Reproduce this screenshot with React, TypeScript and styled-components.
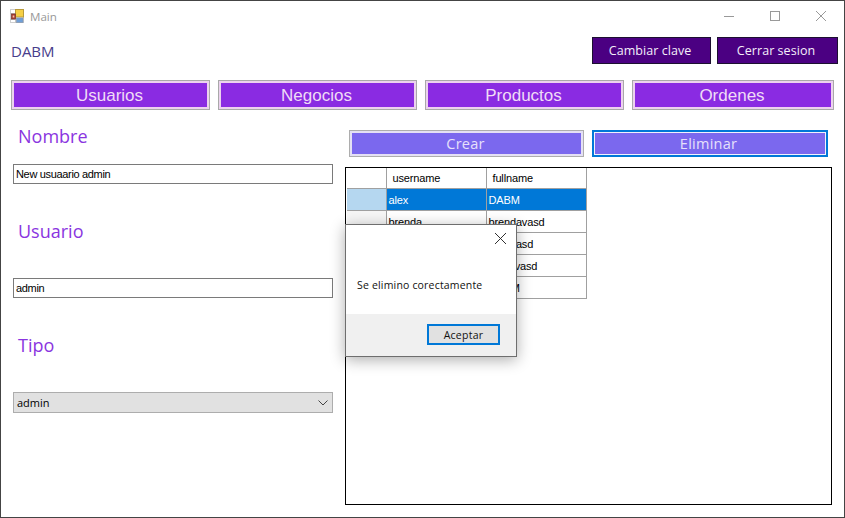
import React from "react";
import styled, { createGlobalStyle } from "styled-components";

const Global = createGlobalStyle`
  html, body { margin: 0; padding: 0; background: #fff; }
  body { width: 845px; height: 518px; overflow: hidden; font-family: "Open Sans", "Noto Sans", sans-serif; }
  * { box-sizing: border-box; }
`;

const Window = styled.div`
  position: relative;
  width: 845px;
  height: 518px;
  background: #fff;
  border: 1px solid #444;
  display: flex;
  flex-direction: column;
`;

const TitleBar = styled.div`
  height: 31px;
  flex: none;
  display: flex;
  align-items: center;
  padding: 0 18px 1px 9px;
  gap: 6px;
`;

const TitleText = styled.span`
  font-size: 11.6px;
  color: #999;
  flex: 1;
`;

const Controls = styled.div`
  display: flex;
  gap: 36px;
  align-items: center;
`;

const Header = styled.div`
  margin-top: 5px;
  height: 27px;
  flex: none;
  display: flex;
  align-items: center;
  padding: 0 6px 0 10px;
`;

const UserName = styled.span`
  flex: 1;
  font-size: 15px;
  padding-top: 1px;
  color: #483d8b;
`;

const HeaderButtons = styled.div`
  display: flex;
  gap: 6px;
`;

const DarkButton = styled.button<{ $w: number }>`
  width: ${(p) => p.$w}px;
  height: 27px;
  padding: 0 3px 0 0;
  background: #4b0082;
  border: 1px solid #1c1030;
  color: #f4eefa;
  font: 12.5px "Open Sans", sans-serif;
  letter-spacing: 0.05px;
`;

const Nav = styled.div`
  margin-top: 16px;
  flex: none;
  padding-left: 10px;
  display: grid;
  grid-template-columns: 199px 199px 199px 202px;
  column-gap: 8px;
`;

const NavButton = styled.button`
  height: 30px;
  padding: 1px 2px 0 0;
  background: #8a2be2;
  border: 1px solid #a9a9a9;
  box-shadow: inset 0 0 0 2px #ecd2ee;
  color: #f0dcf6;
  font: 17px "Liberation Sans", Arial, sans-serif;
`;

const Content = styled.div`
  flex: 1;
  display: grid;
  grid-template-columns: 344px 487px;
`;

const LeftColumn = styled.div`
  padding: 12px 0 0 12px;
  display: flex;
  flex-direction: column;
`;

const Field = styled.div<{ $gap: number }>`
  display: flex;
  flex-direction: column;
  width: 320px;
  margin-bottom: 33px;
  gap: ${(p) => p.$gap}px;
`;

const FieldLabel = styled.div`
  height: 28px;
  line-height: 28px;
  padding-left: 5px;
  font-size: 18px;
  color: #8a35e0;
`;

const TextBox = styled.input`
  width: 320px;
  height: 20px;
  border: 1px solid #7a7a7a;
  padding: 0 2px;
  font: 11px "Liberation Sans", Arial, sans-serif;
  letter-spacing: -0.33px;
  color: #000;
  background: #fff;
  outline: none;
`;

const Combo = styled.div`
  width: 320px;
  height: 21px;
  border: 1px solid #adadad;
  background: #e1e1e1;
  display: flex;
  align-items: center;
  justify-content: space-between;
  padding: 0 4px 0 3px;
  font: 11px "Open Sans", sans-serif;
  color: #000;
`;

const RightColumn = styled.div`
  display: flex;
  flex-direction: column;
`;

const Toolbar = styled.div`
  margin-top: 20px;
  height: 27px;
  padding-left: 4px;
  display: flex;
  gap: 8px;
`;

const ActionButton = styled.button<{ $focused?: boolean }>`
  width: ${(p) => (p.$focused ? 236 : 235)}px;
  height: 27px;
  padding: 0 ${(p) => (p.$focused ? 3 : 2)}px 0 0;
  background: #7b68ee;
  border: ${(p) => (p.$focused ? "2px solid #0078d7" : "1px solid #adadad")};
  box-shadow: inset 0 0 0 ${(p) => (p.$focused ? "1px #f2f0fd" : "2px #e4e0f4")};
  color: #e6e0fb;
  font: 14.5px "Open Sans", sans-serif;
  letter-spacing: 0.25px;
`;

const GridPanel = styled.div`
  margin-top: 10px;
  width: 487px;
  height: 338px;
  border: 1px solid #000;
  background: #fff;
  padding: 0 0 0 1px;
`;

const Table = styled.table`
  border-collapse: collapse;
  table-layout: fixed;
  width: 239px;
  font: 11px "Liberation Sans", Arial, sans-serif;
  letter-spacing: -0.15px;
  color: #000;
`;

const HeadCell = styled.th`
  height: 20px;
  padding: 0 0 0 6px;
  border: 1px solid #a0a0a0;
  border-top: none;
  border-left: none;
  text-align: left;
  font-weight: 400;
  background: #fff;
`;

const RowHead = styled.td<{ $selected?: boolean }>`
  height: 22px;
  padding: 0;
  border: 1px solid #a0a0a0;
  border-left: none;
  background: ${(p) => (p.$selected ? "#b5d7f0" : "#f6f6f6")};
`;

const Cell = styled.td<{ $selected?: boolean }>`
  height: 22px;
  padding: 1px 0 0 2px;
  border: 1px solid #a0a0a0;
  background: ${(p) => (p.$selected ? "#0078d7" : "#fff")};
  color: ${(p) => (p.$selected ? "#fff" : "#000")};
`;

const Dialog = styled.div`
  position: absolute;
  left: 344px;
  top: 223px;
  width: 172px;
  height: 133px;
  background: #fff;
  border: 1px solid #6e6e6e;
  box-shadow: 0 3px 14px rgba(0, 0, 0, 0.32);
  display: flex;
  flex-direction: column;
`;

const DialogTop = styled.div`
  height: 27px;
  display: flex;
  justify-content: flex-end;
  align-items: center;
  padding: 0 10px 0 0;
  flex: none;
`;

const DialogBody = styled.div`
  flex: 1;
  padding: 26px 0 0 11px;
  font: 10.5px "Open Sans", sans-serif;
  letter-spacing: 0.18px;
  color: #111;
`;

const DialogFooter = styled.div`
  height: 42px;
  flex: none;
  background: #f0f0f0;
  display: flex;
  justify-content: flex-end;
  align-items: flex-start;
  padding: 10px 16px 0 0;
`;

const OkButton = styled.button`
  width: 73px;
  height: 21px;
  padding: 0;
  background: #e1e1e1;
  border: 2px solid #0078d7;
  color: #111;
  font: 10.5px "Open Sans", sans-serif;
  letter-spacing: 0.25px;
`;

const AppIcon = () => (
  <svg width="14" height="14" viewBox="0 0 14 14" style={{ flex: "none" }}>
    <rect x="0.5" y="0.5" width="13" height="13" fill="#fff" stroke="#cfcfcf" />
    <path d="M5.5 0v14M0 4.5h6M0 10.5h6" stroke="#c4c4c4" fill="none" />
    <rect x="5.5" y="0.5" width="8" height="7.5" fill="#f5cf45" stroke="#b89a3a" />
    <rect x="1.5" y="5" width="4" height="5" fill="#b03a30" stroke="#7a3a30" strokeWidth="0.8" />
    <rect x="2.7" y="6.5" width="1.6" height="2" fill="#eec7b0" />
    <rect x="6.5" y="9" width="6.5" height="4.5" fill="#6f9fd8" stroke="#8a9ab0" strokeWidth="0.8" />
  </svg>
);

const Minimize = () => (
  <svg width="10" height="10" viewBox="0 0 10 10">
    <path d="M0 5.5h10" stroke="#999" fill="none" />
  </svg>
);
const Maximize = () => (
  <svg width="10" height="10" viewBox="0 0 10 10">
    <rect x="0.5" y="0.5" width="9" height="9" stroke="#999" fill="none" />
  </svg>
);
const Close = ({ color, size }: { color: string; size: number }) => (
  <svg width={size} height={size} viewBox="0 0 10 10">
    <path d="M0 0L10 10M10 0L0 10" stroke={color} strokeWidth={size > 10 ? 0.85 : 1} fill="none" />
  </svg>
);
const Chevron = () => (
  <svg width="10" height="6" viewBox="0 0 10 6">
    <path d="M0.5 0.5L5 5L9.5 0.5" stroke="#444" fill="none" />
  </svg>
);

const rows = [
  ["alex", "DABM"],
  ["brenda", "brendavasd"],
  ["pedro", "pedroasd"],
  ["pablo", "pablovasd"],
  ["admin", "DABM"],
];

export default function App() {
  return (
    <>
      <Global />
      <Window>
        <TitleBar>
          <AppIcon />
          <TitleText>Main</TitleText>
          <Controls>
            <Minimize />
            <Maximize />
            <Close color="#999" size={10} />
          </Controls>
        </TitleBar>
        <Header>
          <UserName>DABM</UserName>
          <HeaderButtons>
            <DarkButton $w={119}>Cambiar clave</DarkButton>
            <DarkButton $w={121}>Cerrar sesion</DarkButton>
          </HeaderButtons>
        </Header>
        <Nav>
          <NavButton>Usuarios</NavButton>
          <NavButton>Negocios</NavButton>
          <NavButton>Productos</NavButton>
          <NavButton>Ordenes</NavButton>
        </Nav>
        <Content>
          <LeftColumn>
            <Field $gap={14}>
              <FieldLabel>Nombre</FieldLabel>
              <TextBox readOnly value="New usuaario admin" />
            </Field>
            <Field $gap={33}>
              <FieldLabel>Usuario</FieldLabel>
              <TextBox readOnly value="admin" />
            </Field>
            <Field $gap={33}>
              <FieldLabel>Tipo</FieldLabel>
              <Combo>
                admin
                <Chevron />
              </Combo>
            </Field>
          </LeftColumn>
          <RightColumn>
            <Toolbar>
              <ActionButton>Crear</ActionButton>
              <ActionButton $focused>Eliminar</ActionButton>
            </Toolbar>
            <GridPanel>
              <Table>
                <colgroup>
                  <col style={{ width: 39 }} />
                  <col style={{ width: 100 }} />
                  <col style={{ width: 100 }} />
                </colgroup>
                <thead>
                  <tr>
                    <HeadCell />
                    <HeadCell>username</HeadCell>
                    <HeadCell>fullname</HeadCell>
                  </tr>
                </thead>
                <tbody>
                  {rows.map(([u, f], i) => (
                    <tr key={u}>
                      <RowHead $selected={i === 0} />
                      <Cell $selected={i === 0}>{u}</Cell>
                      <Cell $selected={i === 0}>{f}</Cell>
                    </tr>
                  ))}
                </tbody>
              </Table>
            </GridPanel>
          </RightColumn>
        </Content>
        <Dialog>
          <DialogTop>
            <Close color="#222" size={11} />
          </DialogTop>
          <DialogBody>Se elimino corectamente</DialogBody>
          <DialogFooter>
            <OkButton>Aceptar</OkButton>
          </DialogFooter>
        </Dialog>
      </Window>
    </>
  );
}
